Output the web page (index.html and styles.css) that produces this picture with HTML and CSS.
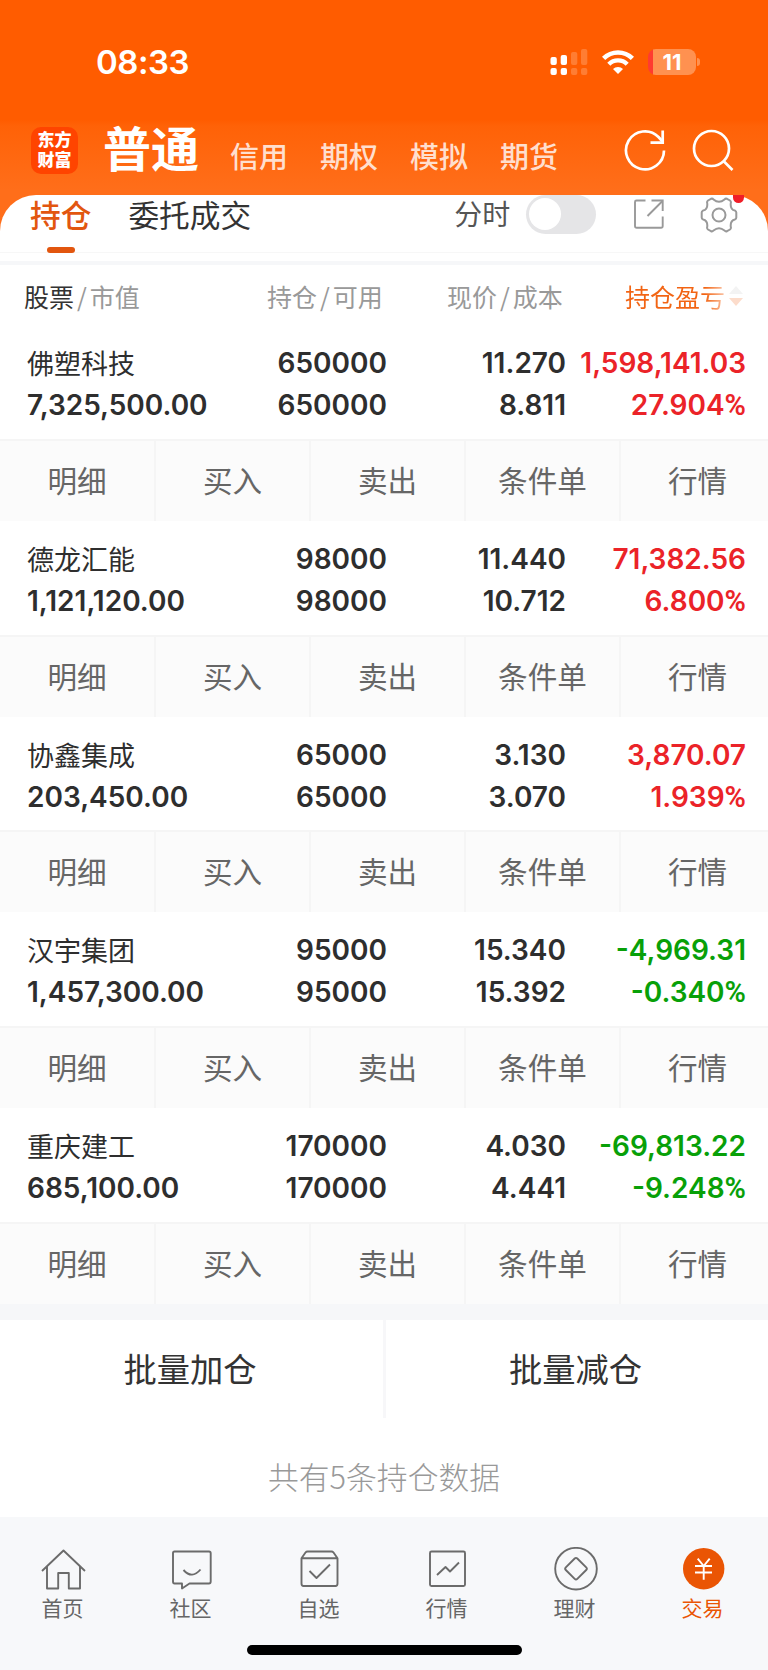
FILE: index.html
```html
<!DOCTYPE html>
<html lang="zh-CN">
<head>
  <meta charset="UTF-8">
  <title>持仓</title>
  <link rel="stylesheet" href="styles.css">
</head>
<body>

<div class="header">
  <div class="status">
    <span class="time">08:33</span>
    <svg class="signal" width="38" height="28" viewBox="0 0 38 28" fill="#fff">
      <rect x="0.5" y="9" width="6.3" height="8" rx="2"/>
      <rect x="10.7" y="7" width="6.3" height="10" rx="2"/>
      <rect x="0.5" y="20" width="6.3" height="7" rx="2"/>
      <rect x="10.7" y="20" width="6.3" height="7" rx="2"/>
      <g opacity=".2">
        <rect x="21" y="4" width="6.3" height="13" rx="2"/>
        <rect x="31" y="1" width="6.3" height="16" rx="2"/>
        <rect x="21" y="20" width="6.3" height="7" rx="2"/>
        <rect x="31" y="20" width="6.3" height="7" rx="2"/>
      </g>
    </svg>
    <svg class="wifi" width="32" height="24" viewBox="0 0 32 24">
      <path d="M1.6 8.4 A20.5 20.5 0 0 1 30.4 8.400" fill="none" stroke="#fff" stroke-width="4.600"/>
      <path d="M6.800 14.200 A13 13 0 0 1 25.200 14.200" fill="none" stroke="#fff" stroke-width="4.400"/>
      <path d="M16 24 L11 19 A7 7 0 0 1 21 19 Z" fill="#fff"/>
    </svg>
    <div class="battery"><span>11</span></div>
    <i class="battery-cap"></i>
  </div>
  <div class="nav">
    <div class="logo"><span>东方</span><span>财富</span></div>
    <b class="nav-current">普通</b>
    <span class="nav-item">信用</span>
    <span class="nav-item">期权</span>
    <span class="nav-item">模拟</span>
    <span class="nav-item">期货</span>
    <svg class="refresh" width="42" height="42" viewBox="0 0 42 42" fill="none" stroke="#fff" stroke-width="2.7">
      <path d="M40 21.5 A19 19 0 1 1 34.5 8 L38.5 12.5"/>
      <path d="M38.7 1.5 V13.6 H26.5"/>
    </svg>
    <svg class="search" width="42" height="42" viewBox="0 0 42 42" fill="none" stroke="#fff" stroke-width="2.7">
      <circle cx="19.5" cy="19.5" r="17.5"/>
      <path d="M31.5 32 L40.5 41"/>
    </svg>
  </div>
</div>

<div class="panel">
  <div class="tabs">
    <span class="tab active">持仓</span>
    <span class="tab">委托成交</span>
    <span class="tab-label">分时</span>
    <span class="switch"></span>
    <svg class="share" width="32" height="32" viewBox="0 0 32 32" fill="none" stroke="#999" stroke-width="1.9">
      <path d="M12.5 2.5 H3.5 Q2 2.5 2 4 V28 Q2 29.8 3.8 29.8 H28 Q29.7 29.8 29.7 28 V18.5"/>
      <path d="M18.5 2.5 H29.7 V13"/>
      <path d="M29.5 3 L14.5 18"/>
    </svg>
    <div class="setting">
      <svg width="38" height="36" viewBox="0 0 38 36" fill="none" stroke="#999" stroke-width="2" stroke-linejoin="round">
        <path d="M11 1.800 Q12.500 1.200 13.500 2.500 Q19 7 24.500 2.500 Q25.500 1.200 27 1.800 L30 3.500 Q31.300 4.500 30.800 6 Q30 12.500 35 13.600 Q36.300 14.200 36.300 15.500 V20.500 Q36.300 21.800 35 22.400 Q30 23.500 30.800 30 Q31.300 31.500 30 32.500 L27 34.200 Q25.500 34.800 24.500 33.500 Q19 29 13.500 33.500 Q12.500 34.800 11 34.200 L8 32.500 Q6.700 31.500 7.200 30 Q8 23.500 3 22.400 Q1.700 21.800 1.700 20.500 V15.500 Q1.700 14.200 3 13.600 Q8 12.500 7.200 6 Q6.700 4.500 8 3.500 Z"/>
        <circle cx="19" cy="18" r="6.500"/>
      </svg>
      <i class="dot"></i>
    </div>
  </div>

  <div class="thead">
    <div><em>股票</em><s>/</s>市值</div>
    <div>持仓<s>/</s>可用</div>
    <div>现价<s>/</s>成本</div>
    <div class="sort">
      持仓盈亏
      <svg width="14" height="22" viewBox="0 0 14 22">
        <path d="M0 9 L7 1 L14 9 Z" fill="#f3f3f3"/>
        <path d="M0 13 L7 21 L14 13 Z" fill="#fcdccb"/>
      </svg>
    </div>
  </div>

  <div class="stock">
    <div class="info">
      <div><span class="name">佛塑科技</span><span>7,325,500.00</span></div>
      <div><span>650000</span><span>650000</span></div>
      <div><span>11.270</span><span>8.811</span></div>
      <div class="up"><span>1,598,141.03</span><span>27.904<s>%</s></span></div>
    </div>
    <div class="actions"><span>明细</span><span>买入</span><span>卖出</span><span>条件单</span><span>行情</span></div>
  </div>
  <div class="stock">
    <div class="info">
      <div><span class="name">德龙汇能</span><span>1,121,120.00</span></div>
      <div><span>98000</span><span>98000</span></div>
      <div><span>11.440</span><span>10.712</span></div>
      <div class="up"><span>71,382.56</span><span>6.800<s>%</s></span></div>
    </div>
    <div class="actions"><span>明细</span><span>买入</span><span>卖出</span><span>条件单</span><span>行情</span></div>
  </div>
  <div class="stock">
    <div class="info">
      <div><span class="name">协鑫集成</span><span>203,450.00</span></div>
      <div><span>65000</span><span>65000</span></div>
      <div><span>3.130</span><span>3.070</span></div>
      <div class="up"><span>3,870.07</span><span>1.939<s>%</s></span></div>
    </div>
    <div class="actions"><span>明细</span><span>买入</span><span>卖出</span><span>条件单</span><span>行情</span></div>
  </div>
  <div class="stock">
    <div class="info">
      <div><span class="name">汉宇集团</span><span>1,457,300.00</span></div>
      <div><span>95000</span><span>95000</span></div>
      <div><span>15.340</span><span>15.392</span></div>
      <div class="down"><span>-4,969.31</span><span>-0.340<s>%</s></span></div>
    </div>
    <div class="actions"><span>明细</span><span>买入</span><span>卖出</span><span>条件单</span><span>行情</span></div>
  </div>
  <div class="stock">
    <div class="info">
      <div><span class="name">重庆建工</span><span>685,100.00</span></div>
      <div><span>170000</span><span>170000</span></div>
      <div><span>4.030</span><span>4.441</span></div>
      <div class="down"><span>-69,813.22</span><span>-9.248<s>%</s></span></div>
    </div>
    <div class="actions"><span>明细</span><span>买入</span><span>卖出</span><span>条件单</span><span>行情</span></div>
  </div>

  <div class="batch">
    <span>批量加仓</span>
    <span>批量减仓</span>
  </div>
  <div class="total">共有5条持仓数据</div>
</div>

<div class="tabbar">
  <div class="tabbar-list">
    <div class="tabbar-item">
      <svg width="46" height="44" viewBox="0 0 46 44">
        <path d="M1 24 L22.500 3.500 L44 24 M6 19.500 V41.500 H17.200 V26 H27.800 V41.500 H39 V19.500"/>
      </svg>
      <span>首页</span>
    </div>
    <div class="tabbar-item">
      <svg width="46" height="44" viewBox="0 0 46 44">
        <path d="M5.500 4.500 H40 Q41.700 4.500 41.700 6.200 V34.500 Q41.700 36.500 40 36.500 H20.500 L13 41.500 V36.500 H5.500 Q4 36.500 4 34.500 V6.200 Q4 4.500 5.500 4.500 Z"/>
        <path d="M14.500 23 Q23 32.500 31.500 22.500"/>
      </svg>
      <span>社区</span>
    </div>
    <div class="tabbar-item">
      <svg width="46" height="44" viewBox="0 0 46 44">
        <path d="M4.500 11.300 L8.500 5.500 Q9.300 4.500 10.500 4.500 H34.500 Q35.700 4.500 36.500 5.500 L40.500 11.300 V36.500 Q40.500 39 38.500 39 H6.500 Q4.500 39 4.500 36.500 Z M4.500 11.300 H40.500"/>
        <path d="M12.500 24 L19.500 31 L33 17.500"/>
      </svg>
      <span>自选</span>
    </div>
    <div class="tabbar-item">
      <svg width="46" height="44" viewBox="0 0 46 44">
        <rect x="5" y="4.500" width="35" height="34.500" rx="1.500"/>
        <path d="M12 28 L20.500 20 L25 24.500 L34 15.500"/>
      </svg>
      <span>行情</span>
    </div>
    <div class="tabbar-item">
      <svg width="46" height="44" viewBox="0 0 46 44">
        <circle cx="23" cy="21.700" r="20.800"/>
        <path d="M21.700 11.500 Q23 10.200 24.300 11.500 L33.200 20.400 Q34.500 21.700 33.200 23 L24.300 31.900 Q23 33.200 21.700 31.900 L12.800 23 Q11.500 21.700 12.800 20.400 Z"/>
      </svg>
      <span>理财</span>
    </div>
    <div class="tabbar-item on">
      <svg width="46" height="44" viewBox="0 0 46 44">
        <circle class="disc" cx="22.700" cy="21.700" r="20.700"/>
        <path class="yen" d="M16.700 11.700 L22.700 19 L28.700 11.700 M14 19 H31 M14 25.500 H31 M22.700 19 V32.700"/>
      </svg>
      <span>交易</span>
    </div>
  </div>
  <div class="home-bar"></div>
</div>

</body>
</html>
```
FILE: styles.css
```css
*{
  box-sizing: border-box;
}

body{
  margin: 0;
  width: 768px;
  height: 1670px;
  overflow: hidden;
  background: #fff;
  font-family: "Noto Sans CJK SC", sans-serif;
  color: #333;
}

svg{
  display: block;
  flex: none;
}

em, i, s{
  font-style: normal;
  text-decoration: none;
}

/* header */
.header{
  height: 232px;
  background: linear-gradient(#ff5c00 120px, #ff6207 126px, #ff6e1a 190px);
}

.status{
  display: flex;
  align-items: center;
  height: 122px;
  padding: 2px 0 0 96px;
}

.time{
  width: 454px;
  color: #fff;
  font: 600 33px/40px Inter, sans-serif;
  letter-spacing: -.5px;
}

.wifi{
  margin-left: 14px;
}

.battery{
  width: 48px;
  height: 26px;
  margin-left: 14px;
  border-radius: 8px;
  background: linear-gradient(90deg, #ff3b30 5px, #ff9150 5px);
  color: #fff;
  font: 700 22px/27px Inter, sans-serif;
  text-align: center;
}

.battery-cap{
  width: 3px;
  height: 8px;
  margin-left: 1px;
  border-radius: 0 4px 4px 0;
  background: #ff9150;
}

.nav{
  display: flex;
  height: 72px;
  padding-left: 31px;
}

.logo{
  display: flex;
  flex-direction: column;
  width: 47px;
  height: 47px;
  margin-top: 5px;
  padding-top: 2px;
  border-radius: 10px;
  background: #ff4400;
  color: #fff;
  font-weight: 900;
  font-size: 17px;
  line-height: 20px;
  text-align: center;
}

.nav-current{
  width: 127px;
  margin-left: 25px;
  color: #fff;
  font-size: 48px;
  line-height: 48px;
}

.nav-item{
  width: 90px;
  padding-top: 12px;
  color: #ffdfce;
  font-size: 29px;
  font-weight: 500;
  line-height: 42px;
}

.refresh{
  margin: 7px 0 0 34px;
}

.search{
  margin: 7px 0 0 26px;
}

/* panel */
.panel{
  height: 1322px;
  margin-top: -37.5px;
  border-radius: 36px 36px 0 0;
  background: #fff;
}

.tabs{
  display: flex;
  height: 58px;
  padding-left: 30px;
  border-bottom: 1px solid #f7f7f7;
}

.tab{
  margin-right: 37px;
  font-size: 30.7px;
  line-height: 37px;
}

.tab.active{
  color: #e2560f;
  font-weight: 500;
}

.tab.active::after{
  content: "";
  display: block;
  width: 28px;
  height: 6px;
  margin: 15px auto 0;
  border-radius: 3px;
  background: #e2560f;
}

.tab-label{
  margin-left: 166px;
  color: #555;
  font-size: 28px;
  line-height: 37px;
}

.switch{
  width: 70px;
  height: 39px;
  margin-left: 16px;
  padding: 3px;
  border-radius: 20px;
  background: #e5e5e7;
}

.switch::after{
  content: "";
  display: block;
  width: 32px;
  height: 32px;
  border-radius: 50%;
  background: #fff;
}

.share{
  margin: 3px 0 0 37px;
}

.setting{
  position: relative;
  margin: 2px 0 0 35px;
  height: 36px;
}

.dot{
  position: absolute;
  top: -2px;
  right: -6px;
  width: 11px;
  height: 8px;
  border-radius: 0 0 6px 6px;
  background: #f01e28;
}

.thead{
  display: grid;
  grid-template-columns: 243px 180px 178px 1fr;
  height: 64.5px;
  padding: 12px 24px 0 24px;
  border-top: 4px solid #f6f7f9;
  margin-top: 8px;
  color: #999;
  font-size: 25px;
  line-height: 38px;
}

.thead em{
  color: #333;
}

.thead s{
  margin: 0 3px;
}

.sort{
  display: flex;
  align-items: center;
  gap: 4px;
  height: 38px;
  color: transparent;
  background: linear-gradient(90deg, #f26413 80px, #fcd5c0 103px);
  -webkit-background-clip: text;
  background-clip: text;
}

.thead .sort{
  margin-left: 0;
}

.info{
  display: grid;
  grid-template-columns: 232px 128px 179px 1fr;
  height: 113.75px;
  padding: 17px 22px 0 27px;
  color: #2e2e2e;
  font: 600 28px/42px Inter, "Noto Sans CJK SC", sans-serif;
}

.info span{
  display: block;
  height: 42px;
}

.info s{
  font-family: Roboto, sans-serif;
  font-size: 29px;
}

.info div + div{
  text-align: right;
}

.info .name{
  padding-top: 2px;
  font-size: 27px;
  font-weight: 400;
}

.info .up{
  color: #eb2328;
}

.info .down{
  color: #08a008;
}

.actions{
  display: grid;
  grid-template-columns: 154px repeat(4, 155px);
  height: 82px;
  overflow: hidden;
  border-top: 2px solid #f5f5f5;
  background: #fbfbfb;
  color: #666;
  font-size: 29.6px;
  line-height: 77px;
  text-align: center;
}

.actions span + span{
  border-left: 2px solid #f5f5f5;
}

.batch{
  display: grid;
  grid-template-columns: 383px 1fr;
  height: 114px;
  border-top: 16px solid #f6f7f9;
  font-size: 33.3px;
  line-height: 96px;
  text-align: center;
}

.batch span{
  padding-right: 3px;
}

.batch span + span{
  border-left: 3px solid #f7f7f9;
}

.total{
  color: #999;
  font-size: 30.8px;
  font-weight: 300;
  line-height: 115px;
  text-align: center;
}

/* tabbar */
.tabbar{
  height: 153px;
  padding-top: 30px;
  background: #f7f8fa;
}

.tabbar-list{
  display: grid;
  grid-template-columns: repeat(6, 1fr);
  color: #666;
  font-size: 21px;
  line-height: 32px;
}

.tabbar-item{
  display: flex;
  flex-direction: column;
  align-items: center;
}

.tabbar-item span{
  margin-right: 3px;
}

.tabbar-item svg{
  fill: none;
  stroke: #6b6b6b;
  stroke-width: 1.9;
  stroke-linejoin: round;
}

.tabbar-item.on{
  color: #ea5504;
}

.tabbar-item .disc{
  fill: #ea5504;
  stroke: none;
}

.tabbar-item .yen{
  stroke: #fff;
}

.home-bar{
  width: 275px;
  height: 10px;
  margin: 22px auto 0;
  border-radius: 5px;
  background: #000;
}
```
